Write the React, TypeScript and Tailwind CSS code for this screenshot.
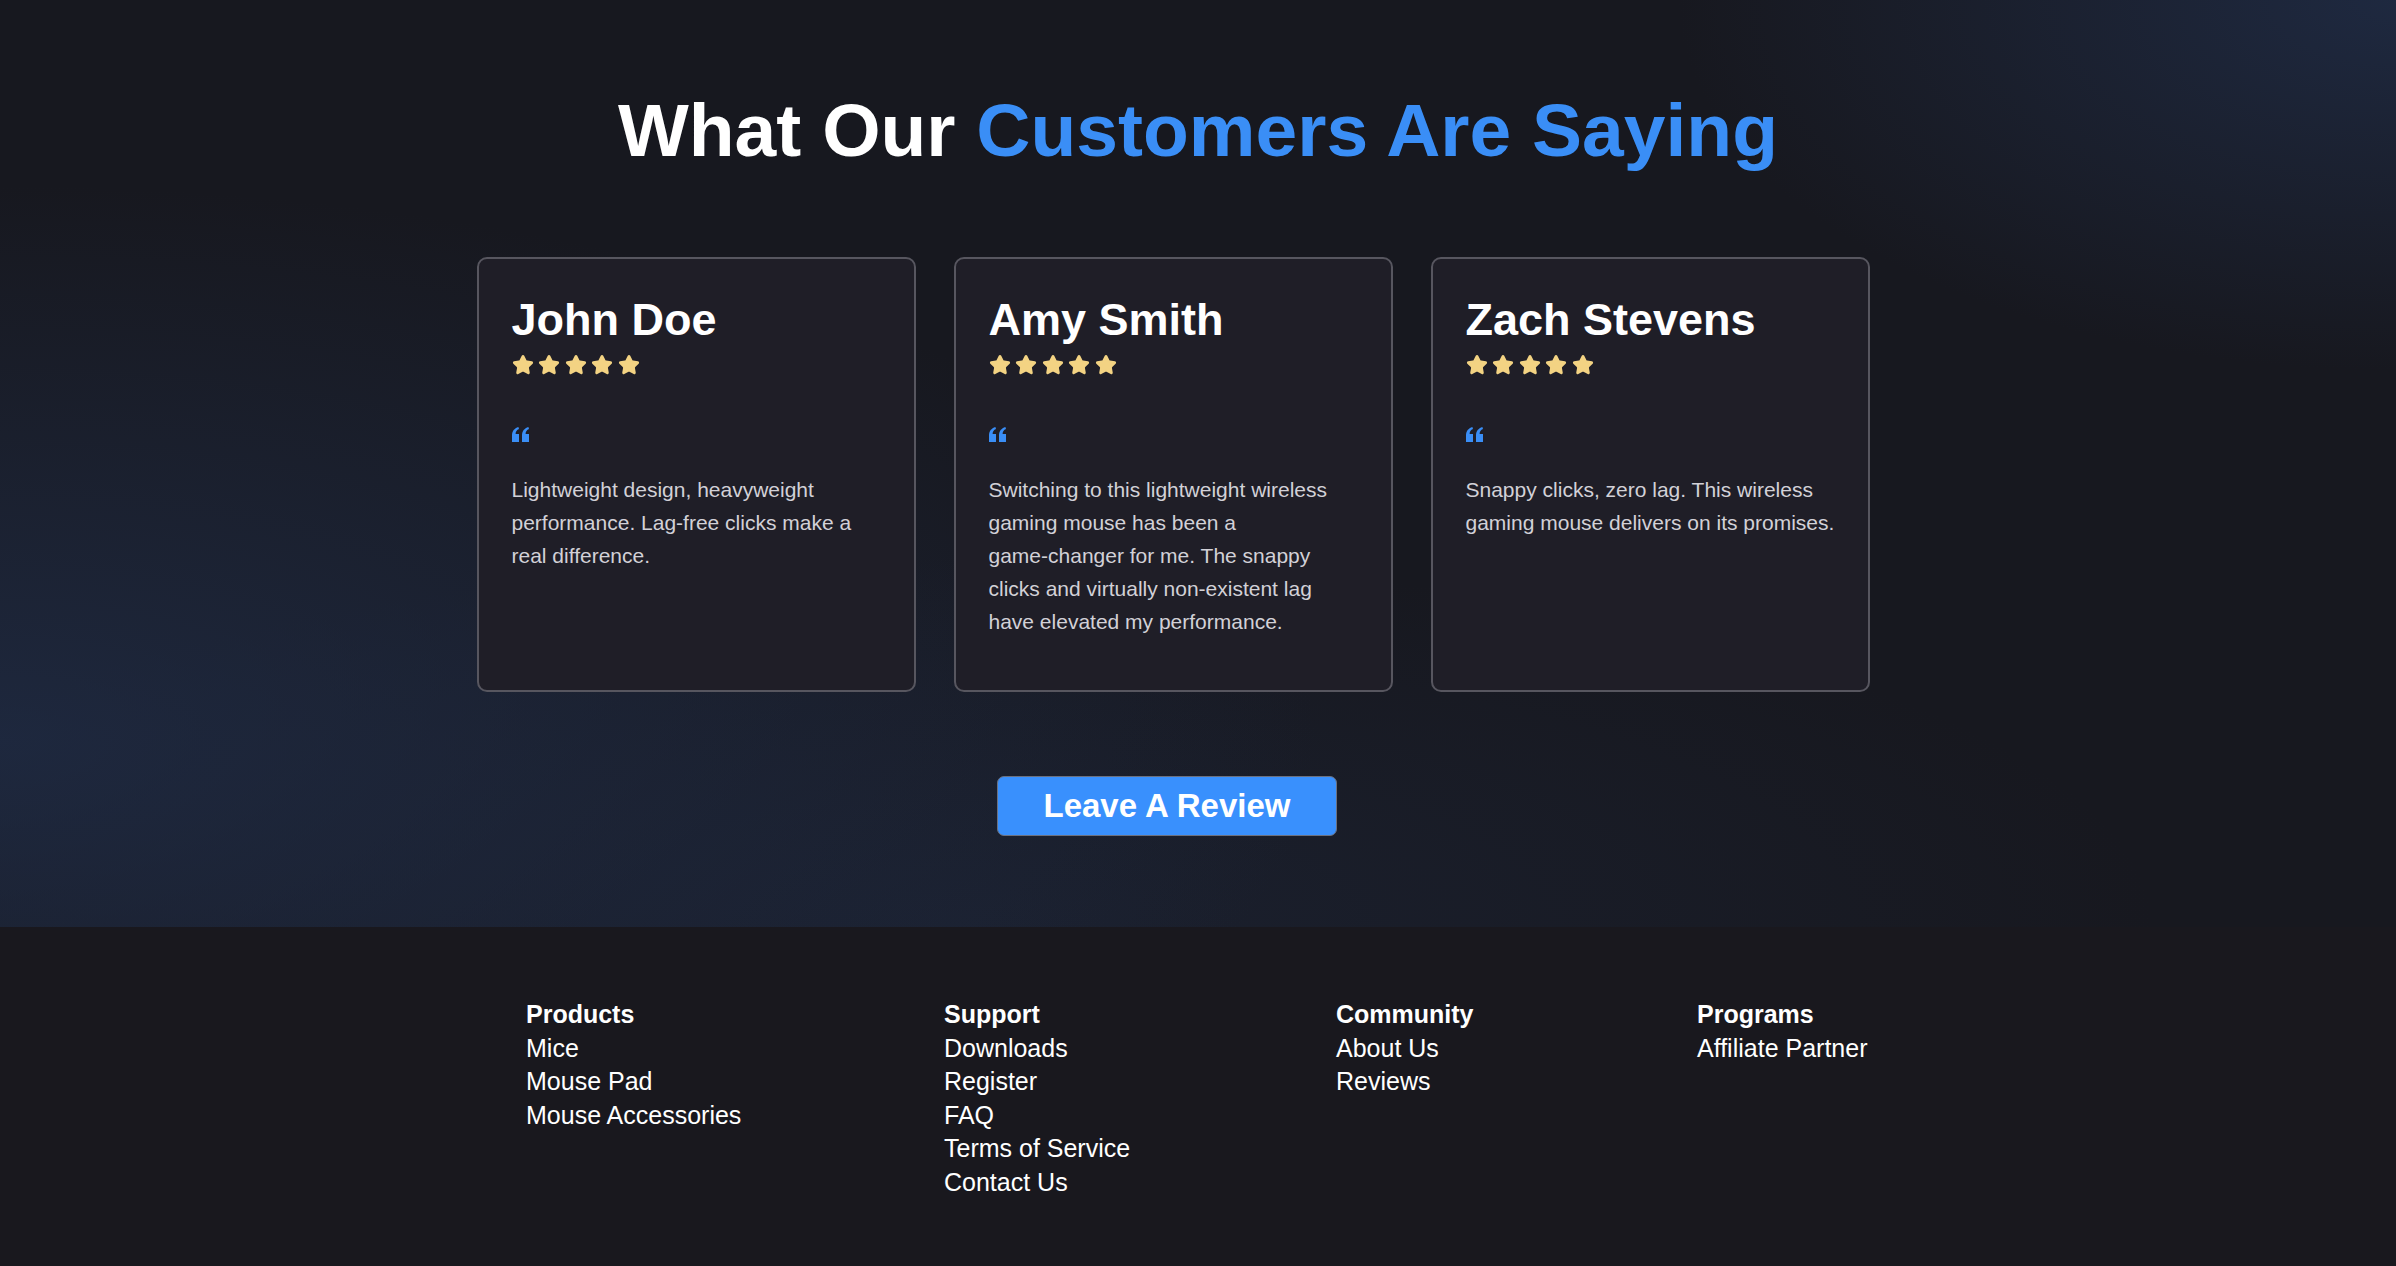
import React from "react";
import { Star } from "lucide-react";

const reviews = [
  {
    id: 1,
    name: "John Doe",
    text: (
      <>Lightweight design, heavyweight performance. Lag-free clicks make a real difference.</>
    ),
  },
  {
    id: 2,
    name: "Amy Smith",
    text: (
      <>
        Switching to this lightweight wireless gaming mouse has been a{" "}
        <span className="whitespace-nowrap">game-changer</span> for me. The snappy clicks and virtually
        non-existent lag have elevated my performance.
      </>
    ),
  },
  {
    id: 3,
    name: "Zach Stevens",
    text: <>Snappy clicks, zero lag. This wireless gaming mouse delivers on its promises.</>,
  },
];

const footerColumns = [
  { title: "Products", width: "w-[418px]", links: ["Mice", "Mouse Pad", "Mouse Accessories"] },
  {
    title: "Support",
    width: "w-[392px]",
    links: ["Downloads", "Register", "FAQ", "Terms of Service", "Contact Us"],
  },
  { title: "Community", width: "w-[361px]", links: ["About Us", "Reviews"] },
  { title: "Programs", width: "w-auto", links: ["Affiliate Partner"] },
];

function QuoteMark() {
  return (
    <svg width="17" height="15" viewBox="0 0 17 15" fill="#3a8ef6">
      <path d="M0 15V8.5C0 4.2 2.3 1.3 6.4 0L7 2C4.7 2.9 3.7 4.5 3.6 7H7V15Z" />
      <path d="M10 15V8.5C10 4.2 12.3 1.3 16.4 0L17 2C14.7 2.9 13.7 4.5 13.6 7H17V15Z" />
    </svg>
  );
}

function ReviewCard({ name, text }: { name: string; text: React.ReactNode }) {
  return (
    <div className="w-[439px] h-[435px] shrink-0 rounded-[10px] border-2 border-[#57565f] bg-[#1f1e27] pl-[33px] pt-[34px]">
      <h3 className="text-[45px] leading-[54px] font-bold text-white">{name}</h3>
      <div className="mt-[7px] flex gap-[4.5px]">
        {[0, 1, 2, 3, 4].map((i) => (
          <Star key={i} size={22} fill="#f3d383" stroke="#f3d383" strokeWidth={2} />
        ))}
      </div>
      <div className="mt-[51px]">
        <QuoteMark />
      </div>
      <p className="mt-[31px] w-[371px] text-[21px] leading-[33px] text-[#d2d1d7]">{text}</p>
    </div>
  );
}

export default function App() {
  return (
    <div className="min-h-screen font-['Liberation_Sans',Arial,sans-serif] bg-[#19181e]">
      <section className="h-[927px] bg-[#17181f] bg-[radial-gradient(ellipse_55%_60%_at_0%_80%,rgba(32,45,72,0.75),transparent),radial-gradient(ellipse_30%_40%_at_100%_0%,rgba(32,45,72,0.8),transparent),radial-gradient(ellipse_50%_40%_at_40%_100%,rgba(30,40,62,0.5),transparent)]">
        <h2 className="pt-[93px] text-center text-[75px] leading-[75px] font-bold text-white">
          What Our <span className="text-[#3a8ef6]">Customers Are Saying</span>
        </h2>

        <div className="mt-[89px] flex justify-center gap-[38px] pr-[50px]">
          {reviews.map((r) => (
            <ReviewCard key={r.id} name={r.name} text={r.text} />
          ))}
        </div>

        <div className="mt-[84px] flex justify-center pr-[62px]">
          <button className="h-[60px] w-[340px] rounded-[7px] border border-[#6b7180] bg-[#3990fd] text-[33px] font-bold text-white">
            Leave A Review
          </button>
        </div>
      </section>

      <footer className="bg-[#19181e] pt-[71px] pb-[67px]">
        <div className="mx-auto flex w-[1344px]">
          {footerColumns.map((col) => (
            <div key={col.title} className={`${col.width} shrink-0 text-[25px] leading-[33.5px] text-white`}>
              <h4 className="font-bold">{col.title}</h4>
              <ul>
                {col.links.map((l) => (
                  <li key={l}>{l}</li>
                ))}
              </ul>
            </div>
          ))}
        </div>
      </footer>
    </div>
  );
}
